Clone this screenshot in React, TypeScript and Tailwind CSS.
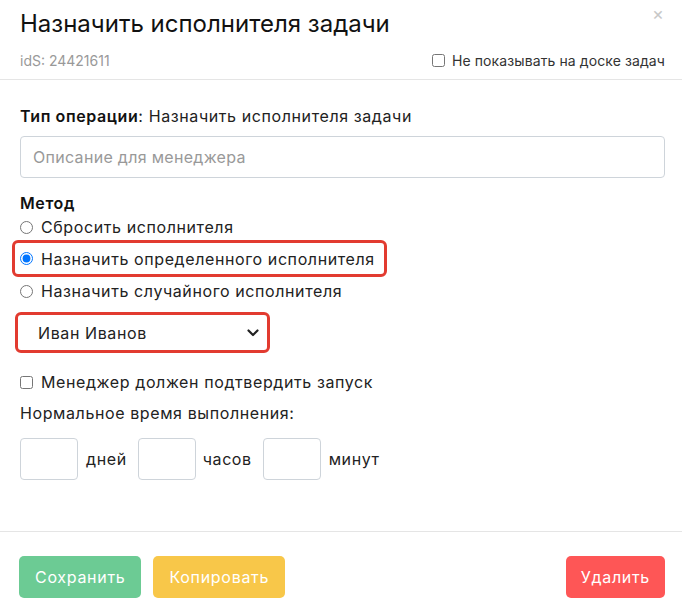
import React, { useState } from "react";

const font = { fontFamily: "Inter, 'Noto Sans', sans-serif" };

export default function App() {
  const [method, setMethod] = useState("specific");

  return (
    <div className="w-[682px] h-[602px] bg-white text-[#222] overflow-hidden" style={font}>
      {/* Header */}
      <div className="relative pl-5 pr-[17px] pt-[6px] h-[80px] border-b border-[#e5e5e5]">
        <h1 className="text-[24px] leading-[36px] font-normal text-[#111]">
          Назначить исполнителя задачи
        </h1>
        <button className="absolute top-[5px] right-[18px] text-[18px] text-[#c8c8c8] leading-none">
          ×
        </button>
        <div className="flex items-center justify-between mt-[8px] text-[14px]">
          <span className="text-[#999]">idS: 24421611</span>
          <label className="flex items-center gap-[7px] text-[#333] tracking-[0.1px]">
            <input type="checkbox" className="w-[13px] h-[13px]" />
            Не показывать на доске задач
          </label>
        </div>
      </div>

      {/* Body */}
      <div className="pl-5 pr-[17px] pt-[24px] h-[452px] border-b border-[#e5e5e5] text-[16px] tracking-[0.6px]">
        <div className="leading-[24px]">
          <span className="font-semibold text-[#111]">Тип операции</span>: Назначить исполнителя задачи
        </div>
        <input
          className="mt-[8px] w-full h-[42px] px-3 border border-[#ced4da] rounded-[4px] text-[16px] tracking-[0.3px] placeholder:text-[#999] outline-none"
          placeholder="Описание для менеджера"
        />

        <div className="mt-[13px] font-semibold text-[#111] leading-[24px]">Метод</div>
        <div className="flex flex-col">
          {[
            ["reset", "Сбросить исполнителя"],
            ["specific", "Назначить определенного исполнителя"],
            ["random", "Назначить случайного исполнителя"],
          ].map(([key, label]) => (
            <label
              key={key}
              className={
                key === "specific"
                  ? "-ml-2 mt-[1px] mb-[2px] w-[375px] h-[37px] flex items-center gap-[8px] pl-[5px] border-[3px] border-[#e23b30] rounded-[6px]"
                  : "flex items-center gap-[8px] h-[24px]"
              }
            >
              <input
                type="radio"
                name="method"
                checked={method === key}
                onChange={() => setMethod(key)}
                className="w-[13px] h-[13px] m-0"
              />
              {label}
            </label>
          ))}
        </div>

        <div className="mt-[9px] -ml-[5px] w-[255px] h-[41px] border-[3px] border-[#e23b30] rounded-[6px] flex items-center justify-between pl-[20px] pr-[8px]">
          <span className="text-[#222]">Иван Иванов</span>
          <svg width="12" height="8" viewBox="0 0 12 8" fill="none">
            <path d="M1.5 1.5 6 6l4.5-4.5" stroke="#222" strokeWidth="2.2" strokeLinecap="round" strokeLinejoin="round" />
          </svg>
        </div>

        <label className="mt-[17px] flex items-center gap-[8px] leading-[24px]">
          <input type="checkbox" className="w-[13px] h-[13px] m-0" />
          Менеджер должен подтвердить запуск
        </label>
        <div className="mt-[7px] leading-[24px]">Нормальное время выполнения:</div>

        <div className="mt-[13px] flex items-center">
          <input className="w-[58px] h-[42px] border border-[#ced4da] rounded-[4px]" />
          <span className="ml-[8px] mr-[11px]">дней</span>
          <input className="w-[58px] h-[42px] border border-[#ced4da] rounded-[4px]" />
          <span className="ml-[7px] mr-[11px]">часов</span>
          <input className="w-[58px] h-[42px] border border-[#ced4da] rounded-[4px]" />
          <span className="ml-[8px]">минут</span>
        </div>
      </div>

      {/* Footer */}
      <div className="pl-[19px] pr-[17px] pt-[24px] flex items-center text-[16px] tracking-[0.7px]">
        <button className="h-[42px] px-4 rounded-[5px] bg-[#6ccb94] text-white">Сохранить</button>
        <button className="ml-3 h-[42px] px-4 rounded-[5px] bg-[#f8c749] text-white">Копировать</button>
        <button className="ml-auto h-[42px] px-[15px] rounded-[5px] bg-[#fe5656] text-white">Удалить</button>
      </div>
    </div>
  );
}
